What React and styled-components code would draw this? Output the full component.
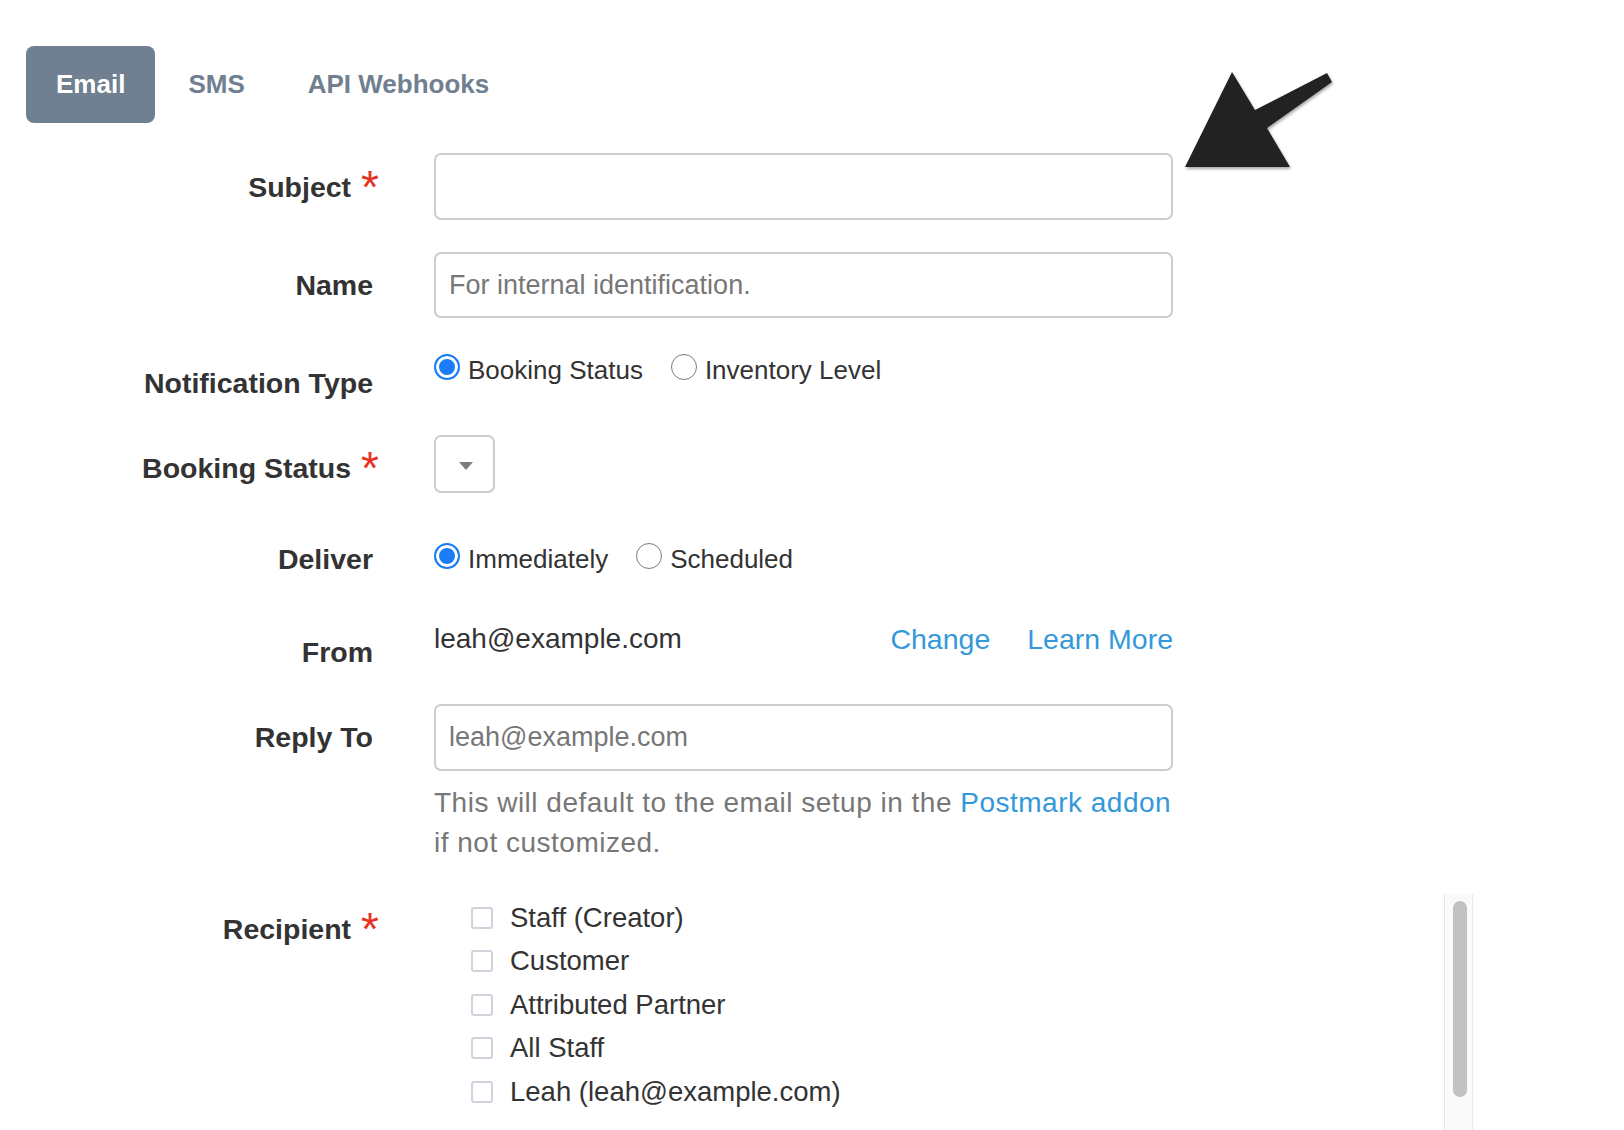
import React from 'react';
import styled, { createGlobalStyle, css } from 'styled-components';

const GlobalStyle = createGlobalStyle`
  html, body {
    margin: 0;
    padding: 0;
    background: #fff;
    overflow: hidden;
  }
  body {
    font-family: "Liberation Sans", Helvetica, Arial, sans-serif;
    color: #333;
  }
  * {
    box-sizing: border-box;
  }
`;

const Page = styled.div`
  position: relative;
  width: 1624px;
  height: 1130px;
  padding: 46px 0 0 26px;
`;

const Tabs = styled.div`
  display: flex;
  gap: 3px;
`;

const Tab = styled.button`
  height: 77px;
  padding: 0 30px;
  border: 0;
  border-radius: 8px;
  font-family: inherit;
  font-size: 26px;
  font-weight: 700;
  color: ${(p) => (p.$active ? '#fff' : '#708090')};
  background: ${(p) => (p.$active ? '#708090' : 'transparent')};
`;

const Row = styled.div`
  display: grid;
  grid-template-columns: 353px auto;
  column-gap: 55px;
  align-items: start;
  margin-top: ${(p) => p.$mt}px;
`;

const Label = styled.label`
  display: flex;
  justify-content: flex-end;
  align-items: flex-start;
  padding-top: ${(p) => p.$offset || 0}px;
  padding-right: ${(p) => (p.$required ? 0 : 6)}px;
  font-size: 28.5px;
  font-weight: 700;
  line-height: 40px;
  color: #333;
  white-space: nowrap;
`;

const Star = styled.span`
  margin-left: 10px;
  font-size: 46px;
  font-weight: 400;
  line-height: 40px;
  color: #e8321f;
`;

const TextInput = styled.input`
  display: block;
  width: 739px;
  height: ${(p) => p.$h || 67}px;
  padding: 0 13px;
  border: 2px solid #cdcdcd;
  border-radius: 7px;
  font-family: inherit;
  font-size: 27px;
  color: #333;
  outline: none;
  &::placeholder {
    color: #777;
  }
`;

const RadioGroup = styled.div`
  display: flex;
  align-items: center;
  gap: 28px;
  height: 40px;
`;

const Option = styled.label`
  display: flex;
  align-items: center;
  gap: 8px;
  font-size: 26px;
  color: #333;
  white-space: nowrap;
`;

const Radio = styled.input.attrs({ type: 'radio' })`
  appearance: none;
  flex-shrink: 0;
  width: 26px;
  height: 26px;
  margin: -6px 0 0;
  border-radius: 50%;
  ${(p) =>
    p.checked
      ? css`
          background: #1a7cf7;
          border: 2px solid #1a7cf7;
          box-shadow: inset 0 0 0 3px #fff;
        `
      : css`
          background: #fff;
          border: 1.5px solid #7a7a7a;
        `}
`;

const SelectBox = styled.div`
  display: flex;
  align-items: center;
  justify-content: center;
  width: 61px;
  height: 58px;
  padding: 4px 0 0 3px;
  border: 2px solid #cdcdcd;
  border-radius: 7px;
`;

const Caret = styled.span`
  width: 0;
  height: 0;
  border-left: 7px solid transparent;
  border-right: 7px solid transparent;
  border-top: 8px solid #7d7d7d;
`;

const FromLine = styled.div`
  display: flex;
  align-items: center;
  width: 739px;
  height: 40px;
  font-size: 28.5px;
`;

const Email = styled.span`
  flex: 1;
  font-size: 28px;
  color: #333;
`;

const Link = styled.a`
  color: #3498db;
  text-decoration: none;
  & + & {
    margin-left: 37px;
  }
`;

const Help = styled.p`
  margin: 12px 0 0;
  width: 739px;
  font-size: 28px;
  letter-spacing: 0.5px;
  line-height: 40px;
  color: #777;
  white-space: nowrap;
`;

const ScrollBox = styled.div`
  display: flex;
  width: 1039px;
  height: 250px;
`;

const List = styled.div`
  flex: 1;
  padding: 2px 0 0 37px;
  overflow: hidden;
`;

const Track = styled.div`
  width: 29px;
  height: 100%;
  padding: 7px 5px 0 8px;
  background: #fafafa;
  border-left: 1px solid #e8e8e8;
  border-right: 1px solid #e8e8e8;
`;

const Thumb = styled.div`
  height: 196px;
  border-radius: 8px;
  background: #c1c1c1;
`;

const CheckItem = styled.label`
  display: flex;
  align-items: center;
  gap: 17px;
  height: 43.5px;
  font-size: 27.5px;
  color: #333;
  white-space: nowrap;
`;

const Checkbox = styled.input.attrs({ type: 'checkbox' })`
  appearance: none;
  flex-shrink: 0;
  width: 22px;
  height: 22px;
  margin: 0;
  border: 2px solid #d2d2dc;
  border-radius: 3px;
  background: #fff;
`;

const Arrow = styled.svg`
  position: absolute;
  left: 1170px;
  top: 60px;
  filter: drop-shadow(1px 2px 1.5px rgba(0, 0, 0, 0.35));
`;

const recipients = [
  'Staff (Creator)',
  'Customer',
  'Attributed Partner',
  'All Staff',
  'Leah (leah@example.com)',
];

const App = () => {
  return (
    <Page>
      <GlobalStyle />
      <Tabs>
        <Tab $active>Email</Tab>
        <Tab>SMS</Tab>
        <Tab>API Webhooks</Tab>
      </Tabs>

      <Row $mt={30}>
        <Label $offset={14} $required>
          Subject<Star>*</Star>
        </Label>
        <TextInput />
      </Row>

      <Row $mt={32}>
        <Label $offset={13}>Name</Label>
        <TextInput $h={66} placeholder="For internal identification." />
      </Row>

      <Row $mt={32}>
        <Label $offset={13}>Notification Type</Label>
        <RadioGroup>
          <Option>
            <Radio name="type" checked readOnly />
            Booking Status
          </Option>
          <Option>
            <Radio name="type" checked={false} readOnly />
            Inventory Level
          </Option>
        </RadioGroup>
      </Row>

      <Row $mt={32}>
        <Label $offset={13} $required>
          Booking Status<Star>*</Star>
        </Label>
        <SelectBox>
          <Caret />
        </SelectBox>
      </Row>

      <Row $mt={46}>
        <Label>Deliver</Label>
        <RadioGroup>
          <Option>
            <Radio name="deliver" checked readOnly />
            Immediately
          </Option>
          <Option>
            <Radio name="deliver" checked={false} readOnly />
            Scheduled
          </Option>
        </RadioGroup>
      </Row>

      <Row $mt={40}>
        <Label $offset={13}>From</Label>
        <FromLine>
          <Email>leah@example.com</Email>
          <Link href="#">Change</Link>
          <Link href="#">Learn More</Link>
        </FromLine>
      </Row>

      <Row $mt={32}>
        <Label $offset={13}>Reply To</Label>
        <div>
          <TextInput placeholder="leah@example.com" />
          <Help>
            This will default to the email setup in the <Link href="#">Postmark addon</Link>
            <br />
            if not customized.
          </Help>
        </div>
      </Row>

      <Row $mt={31}>
        <Label $offset={15} $required>
          Recipient<Star>*</Star>
        </Label>
        <ScrollBox>
          <List>
            {recipients.map((r) => (
              <CheckItem key={r}>
                <Checkbox />
                {r}
              </CheckItem>
            ))}
          </List>
          <Track>
            <Thumb />
          </Track>
        </ScrollBox>
      </Row>

      <Arrow width="180" height="120" viewBox="0 0 180 120">
        <polygon
          points="62,12 85,50 157,13 162,22 97,68 120,107 15,107"
          fill="#222"
        />
      </Arrow>
    </Page>
  );
};

export default App;
